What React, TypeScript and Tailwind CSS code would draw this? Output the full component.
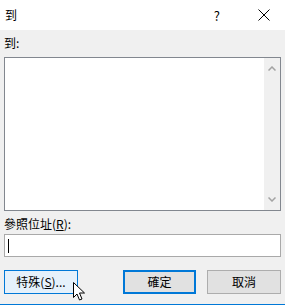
import React from 'react';

const font = { fontFamily: '"Noto Sans CJK TC", "Noto Sans", sans-serif' };

const App = () => {
  return (
    <div className="w-[285px] h-[305px] flex flex-col bg-white text-[12px] text-black overflow-hidden" style={font}>
      {/* Title bar */}
      <div className="h-[30px] flex items-center bg-white">
        <span className="ml-[5px] text-[12px] leading-none">到</span>
        <span className="ml-auto mr-[38px] text-[13px] leading-none">?</span>
        <svg width="12" height="12" viewBox="0 0 12 12" className="mr-[15px]">
          <path d="M0.5 0.5 L11.5 11.5 M11.5 0.5 L0.5 11.5" stroke="#000" strokeWidth="1" fill="none" />
        </svg>
      </div>

      {/* Body */}
      <div className="relative flex-1 flex flex-col bg-[#f0f0f0] px-[4px] border-b border-[#0078d7]">
        <div className="h-[27px] pt-[6px] leading-[14px]">到:</div>

        <div className="h-[154px] flex border border-[#82878f] bg-white">
          <div className="flex-1" />
          <div className="w-[16px] bg-[#f0f0f0] flex flex-col items-center justify-between py-[8px]">
            <svg width="8" height="5" viewBox="0 0 8 5">
              <path d="M0.5 4.5 L4 1 L7.5 4.5" stroke="#a3a3a3" strokeWidth="1.5" fill="none" />
            </svg>
            <svg width="8" height="5" viewBox="0 0 8 5">
              <path d="M0.5 0.5 L4 4 L7.5 0.5" stroke="#a3a3a3" strokeWidth="1.5" fill="none" />
            </svg>
          </div>
        </div>

        <div className="h-[23px] pt-[6px] leading-[14px]">
          參照位址(<span className="underline">R</span>):
        </div>

        <div className="h-[23px] border border-[#a9a9a9] bg-white flex items-center px-[3px]">
          <div className="w-px h-[14px] bg-black" />
        </div>

        <div className="mt-[13px] flex items-center">
          <button className="w-[74px] h-[24px] border border-[#0078d7] bg-[#e5f1fb] leading-none">
            特殊(<span className="underline">S</span>)...
          </button>
          <button className="ml-auto w-[73px] h-[24px] border-2 border-[#0078d7] bg-[#e1e1e1] leading-none">
            確定
          </button>
          <button className="ml-[11px] w-[74px] h-[24px] border border-[#adadad] bg-[#e1e1e1] leading-none">
            取消
          </button>
        </div>

        {/* Mouse pointer */}
        <svg width="13" height="19" viewBox="0 0 13 19" className="absolute left-[73px] top-[252px]">
          <path
            d="M0.5 0.5 L0.5 15.5 L4 12 L6.5 18 L9 17 L6.5 11 L11.5 11 Z"
            fill="#fff"
            stroke="#000"
            strokeWidth="1"
            strokeLinejoin="miter"
          />
        </svg>
      </div>
    </div>
  );
};

export default App;
